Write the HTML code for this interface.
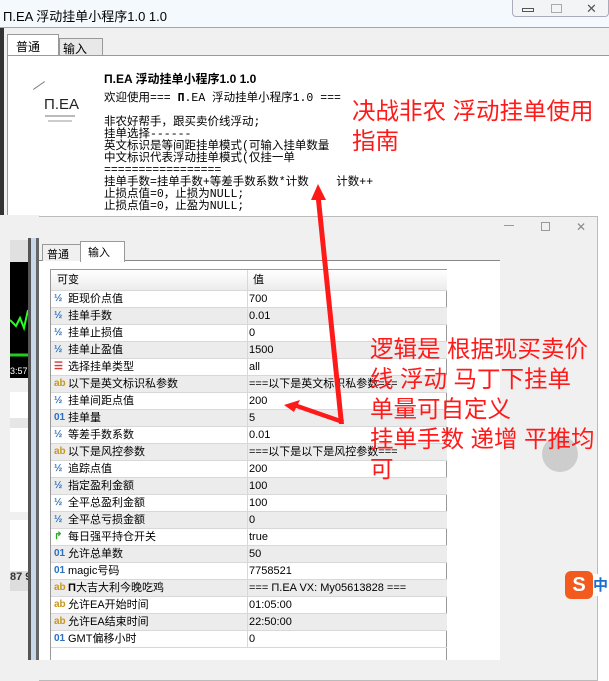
<!DOCTYPE html>
<html><head><meta charset="utf-8">
<style>
*{margin:0;padding:0;box-sizing:border-box}
body{width:609px;height:681px;overflow:hidden;position:relative;background:#f0f0f0;font-family:"Liberation Sans","Noto Sans CJK SC",sans-serif;}
.abs{position:absolute}
.cj{font-family:"Liberation Mono","Noto Sans CJK SC",monospace}
.red{color:#ff1a1a;font-size:23.5px;font-family:"Liberation Sans","Noto Sans CJK SC",sans-serif;line-height:30px;white-space:nowrap}
.row{position:absolute;left:0;width:396px;height:17px;border-bottom:1px solid #d8d8d8;font-size:11px;line-height:16px;white-space:nowrap}
.row .n{position:absolute;left:17px;top:0}
.row .v{position:absolute;left:198px;top:0}
.row .i{position:absolute;left:3px;top:0;font-size:10px;font-weight:bold}
.row .sep{position:absolute;left:196px;top:0;width:1px;height:17px;background:#d8d8d8}
.g{background:#ececec}
</style></head><body>
<div class="abs" style="left:0;top:0;width:609px;height:28px;background:#f4f9fd;border-bottom:1px solid #9aa;"></div>
<div class="abs" style="left:3px;top:6px;font-size:13px;color:#000">Π.EA 浮动挂单小程序1.0 1.0</div>
<div class="abs" style="left:512px;top:0;width:97px;height:17px;border:1px solid #aab;border-top:none;border-radius:0 0 4px 4px;background:#f2f4f6"></div>
<div class="abs" style="left:522px;top:8px;width:12px;height:4px;border:1px solid #555"></div>
<div class="abs" style="left:551px;top:4px;width:11px;height:9px;border:1px solid #aaa"></div>
<div class="abs" style="left:586px;top:1px;font-size:13px;color:#555">✕</div>
<div class="abs" style="left:0;top:28px;width:4px;height:200px;background:#333"></div>
<div class="abs" style="left:7px;top:34px;width:52px;height:22px;background:#fff;border:1px solid #999;border-bottom:none;font-size:12px;padding:3px 0 0 8px">普通</div>
<div class="abs" style="left:59px;top:38px;width:44px;height:17px;background:#e8e8e8;border:1px solid #999;border-bottom:none;font-size:12px;padding:1px 0 0 3px">输入</div>
<div class="abs" style="left:7px;top:55px;width:602px;height:170px;background:#fff;border:1px solid #999;border-right:none"></div>
<div class="abs" style="left:32px;top:85px;width:14px;height:1px;background:#777;transform:rotate(-35deg)"></div>
<div class="abs" style="left:44px;top:96px;font-size:15px;color:#222">Π.EA</div>
<div class="abs" style="left:45px;top:115px;width:30px;height:2px;background:#bbb"></div>
<div class="abs" style="left:48px;top:120px;width:24px;height:2px;background:#ccc"></div>
<div class="abs" style="left:104px;top:70px;font-size:12px;font-weight:bold">Π.EA 浮动挂单小程序1.0 1.0</div>
<div class="abs cj" style="left:104px;top:93px;font-size:11.5px;line-height:12px;white-space:pre">欢迎使用=== <b>Π</b>.EA 浮动挂单小程序1.0 ===

非农好帮手，跟买卖价线浮动;
挂单选择------
英文标识是等间距挂单模式(可输入挂单数量
中文标识代表浮动挂单模式(仅挂一单
=================
挂单手数=挂单手数+等差手数系数*计数    计数++
止损点值=0，止损为NULL;
止损点值=0，止盈为NULL;</div>
<div class="abs red" style="left:352px;top:96px">决战非农 浮动挂单使用<br>指南</div>

<div class="abs" style="left:0;top:215px;width:40px;height:466px;background:#f0f0f0"></div>
<div class="abs" style="left:10px;top:240px;width:19px;height:22px;background:#e0e0e0"></div>
<div class="abs" style="left:10px;top:262px;width:18px;height:116px;background:#000"></div>
<svg class="abs" style="left:10px;top:300px" width="18" height="60"><polyline points="0,20 6,26 10,18 14,28 18,10" fill="none" stroke="#2f2" stroke-width="2"/><line x1="0" y1="55" x2="18" y2="55" stroke="#2c2" stroke-width="3"/></svg>
<div class="abs" style="left:10px;top:366px;font-size:9px;color:#fff">3:57</div>
<div class="abs" style="left:10px;top:392px;width:19px;height:120px;background:#fff"></div>
<div class="abs" style="left:10px;top:418px;width:19px;height:10px;background:#e6e6e6"></div>
<div class="abs" style="left:10px;top:520px;width:19px;height:60px;background:#fff"></div>
<div class="abs" style="left:10px;top:571px;width:19px;height:20px;background:#ddd;font-size:11px;font-weight:bold;color:#333;white-space:nowrap;overflow:hidden">87 9</div>
<div class="abs" style="left:28px;top:238px;width:3px;height:422px;background:#555"></div>
<div class="abs" style="left:31px;top:238px;width:5px;height:422px;background:#c8d8e8"></div>
<div class="abs" style="left:36px;top:238px;width:3px;height:422px;background:#666"></div>

<div class="abs" style="left:39px;top:216px;width:559px;height:465px;background:#f0f0f0;border:1px solid #bbb;border-left:none"></div>
<div class="abs" style="left:504px;top:225px;width:10px;height:1px;background:#999"></div>
<div class="abs" style="left:541px;top:222px;width:9px;height:9px;border:1px solid #999"></div>
<div class="abs" style="left:576px;top:220px;font-size:12px;color:#888">✕</div>
<div class="abs" style="left:39px;top:240px;width:461px;height:420px;background:#fff"></div>
<div class="abs" style="left:39px;top:240px;width:461px;height:21px;background:#f0f0f0;border-bottom:1px solid #888"></div>
<div class="abs" style="left:42px;top:244px;width:39px;height:17px;background:#f0f0f0;border:1px solid #999;border-bottom:none;font-size:11px;padding:1px 0 0 4px">普通</div>
<div class="abs" style="left:80px;top:241px;width:45px;height:21px;background:#fff;border:1px solid #999;border-bottom:none;font-size:11px;padding:2px 0 0 7px">输入</div>
<div class="abs" style="left:50px;top:269px;width:397px;height:391px;border:1px solid #999;border-bottom:none;background:#fff">
<div style="position:absolute;left:0;top:0;width:396px;height:21px;background:linear-gradient(#fff,#ececec);border-bottom:1px solid #d8d8d8;font-size:11px;line-height:21px"><span style="position:absolute;left:6px">可变</span><span style="position:absolute;left:196px;top:0;width:1px;height:21px;background:#d8d8d8"></span><span style="position:absolute;left:202px">值</span></div>
<div style="position:absolute;left:0;top:21px;width:396px">
<div class="row" style="top:0"><span class="i" style="color:#2a6fc0">½</span><span class="n">距现价点值</span><span class="sep"></span><span class="v">700</span></div>
<div class="row g" style="top:17px"><span class="i" style="color:#2a6fc0">½</span><span class="n">挂单手数</span><span class="sep"></span><span class="v">0.01</span></div>
<div class="row" style="top:34px"><span class="i" style="color:#2a6fc0">½</span><span class="n">挂单止损值</span><span class="sep"></span><span class="v">0</span></div>
<div class="row g" style="top:51px"><span class="i" style="color:#2a6fc0">½</span><span class="n">挂单止盈值</span><span class="sep"></span><span class="v">1500</span></div>
<div class="row" style="top:68px"><span class="i" style="color:#d33">☰</span><span class="n">选择挂单类型</span><span class="sep"></span><span class="v">all</span></div>
<div class="row g" style="top:85px"><span class="i" style="color:#c8961e">ab</span><span class="n">以下是英文标识私参数</span><span class="sep"></span><span class="v">===以下是英文标识私参数===</span></div>
<div class="row" style="top:102px"><span class="i" style="color:#2a6fc0">½</span><span class="n">挂单间距点值</span><span class="sep"></span><span class="v">200</span></div>
<div class="row g" style="top:119px"><span class="i" style="color:#2a6fc0">01</span><span class="n">挂单量</span><span class="sep"></span><span class="v">5</span></div>
<div class="row" style="top:136px"><span class="i" style="color:#2a6fc0">½</span><span class="n">等差手数系数</span><span class="sep"></span><span class="v">0.01</span></div>
<div class="row g" style="top:153px"><span class="i" style="color:#c8961e">ab</span><span class="n">以下是风控参数</span><span class="sep"></span><span class="v">===以下是以下是风控参数===</span></div>
<div class="row" style="top:170px"><span class="i" style="color:#2a6fc0">½</span><span class="n">追踪点值</span><span class="sep"></span><span class="v">200</span></div>
<div class="row g" style="top:187px"><span class="i" style="color:#2a6fc0">½</span><span class="n">指定盈利金额</span><span class="sep"></span><span class="v">100</span></div>
<div class="row" style="top:204px"><span class="i" style="color:#2a6fc0">½</span><span class="n">全平总盈利金额</span><span class="sep"></span><span class="v">100</span></div>
<div class="row g" style="top:221px"><span class="i" style="color:#2a6fc0">½</span><span class="n">全平总亏损金额</span><span class="sep"></span><span class="v">0</span></div>
<div class="row" style="top:238px"><span class="i" style="color:#2a2">↱</span><span class="n">每日强平持仓开关</span><span class="sep"></span><span class="v">true</span></div>
<div class="row g" style="top:255px"><span class="i" style="color:#2a6fc0">01</span><span class="n">允许总单数</span><span class="sep"></span><span class="v">50</span></div>
<div class="row" style="top:272px"><span class="i" style="color:#2a6fc0">01</span><span class="n">magic号码</span><span class="sep"></span><span class="v">7758521</span></div>
<div class="row g" style="top:289px"><span class="i" style="color:#c8961e">ab</span><span class="n"><b>Π</b>大吉大利今晚吃鸡</span><span class="sep"></span><span class="v">=== Π.EA VX: My05613828 ===</span></div>
<div class="row" style="top:306px"><span class="i" style="color:#c8961e">ab</span><span class="n">允许EA开始时间</span><span class="sep"></span><span class="v">01:05:00</span></div>
<div class="row g" style="top:323px"><span class="i" style="color:#c8961e">ab</span><span class="n">允许EA结束时间</span><span class="sep"></span><span class="v">22:50:00</span></div>
<div class="row" style="top:340px"><span class="i" style="color:#2a6fc0">01</span><span class="n">GMT偏移小时</span><span class="sep"></span><span class="v">0</span></div>
</div></div>
<div class="abs" style="left:598px;top:215px;width:11px;height:466px;background:#fff"></div>
<div class="abs" style="left:542px;top:436px;width:36px;height:36px;border-radius:50%;background:#cdcdcd"></div>
<div class="abs" style="left:565px;top:571px;width:28px;height:28px;border-radius:6px;background:#f25a1e;color:#fff;font-weight:bold;font-size:20px;text-align:center;line-height:28px">S</div>
<div class="abs" style="left:593px;top:574px;width:16px;height:22px;background:#fff;color:#1a6fd0;font-weight:bold;font-size:15px">中</div>
<div class="red abs" style="left:370px;top:334px">逻辑是 根据现买卖价<br>线 浮动 马丁下挂单<br>单量可自定义<br>挂单手数 递增 平推均<br>可</div>
<svg class="abs" style="left:0;top:0" width="609" height="681">
<polygon points="318,184 311,200 316,200 339,424 344,424 321,200 326,200" fill="#ff1a1a"/>
<polygon points="284,405 300,400 298,404 344,420 342,424 296,408 294,412" fill="#ff1a1a"/>
</svg>
</body></html>
